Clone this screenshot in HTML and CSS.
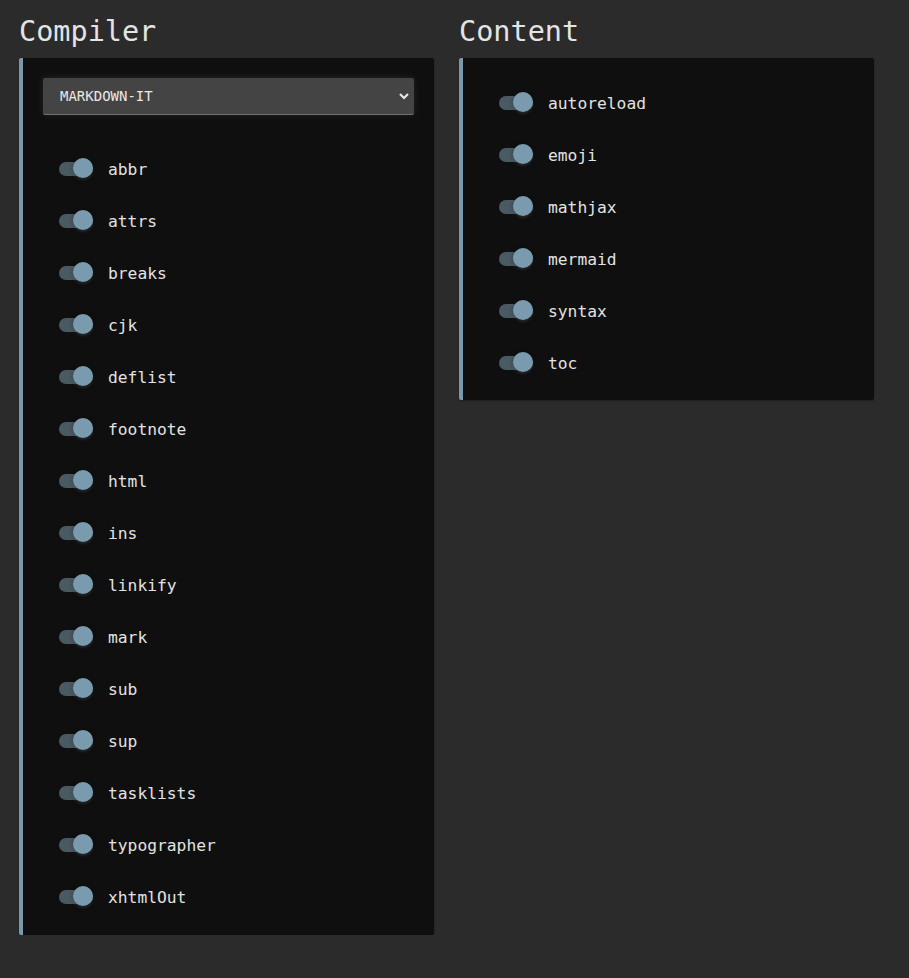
FILE: index.html
```html
<!DOCTYPE html>
<html>
<head>
<meta charset="utf-8">
<link rel="stylesheet" href="styles.css">
</head>
<body>
<div class="page">
  <section class="column">
    <h2 class="title">Compiler</h2>
    <div class="card">
      <div class="select">
        <span class="select-text">MARKDOWN-IT</span>
        <svg class="chevron" width="12" height="8" viewBox="0 0 12 8"><path d="M2 2 L6 6 L10 2" fill="none" stroke="#e6e6e6" stroke-width="2.2"/></svg>
      </div>
      <ul class="list list-compiler">
        <li class="row"><span class="switch"><span class="track"></span><span class="thumb"></span></span><span class="label">abbr</span></li>
        <li class="row"><span class="switch"><span class="track"></span><span class="thumb"></span></span><span class="label">attrs</span></li>
        <li class="row"><span class="switch"><span class="track"></span><span class="thumb"></span></span><span class="label">breaks</span></li>
        <li class="row"><span class="switch"><span class="track"></span><span class="thumb"></span></span><span class="label">cjk</span></li>
        <li class="row"><span class="switch"><span class="track"></span><span class="thumb"></span></span><span class="label">deflist</span></li>
        <li class="row"><span class="switch"><span class="track"></span><span class="thumb"></span></span><span class="label">footnote</span></li>
        <li class="row"><span class="switch"><span class="track"></span><span class="thumb"></span></span><span class="label">html</span></li>
        <li class="row"><span class="switch"><span class="track"></span><span class="thumb"></span></span><span class="label">ins</span></li>
        <li class="row"><span class="switch"><span class="track"></span><span class="thumb"></span></span><span class="label">linkify</span></li>
        <li class="row"><span class="switch"><span class="track"></span><span class="thumb"></span></span><span class="label">mark</span></li>
        <li class="row"><span class="switch"><span class="track"></span><span class="thumb"></span></span><span class="label">sub</span></li>
        <li class="row"><span class="switch"><span class="track"></span><span class="thumb"></span></span><span class="label">sup</span></li>
        <li class="row"><span class="switch"><span class="track"></span><span class="thumb"></span></span><span class="label">tasklists</span></li>
        <li class="row"><span class="switch"><span class="track"></span><span class="thumb"></span></span><span class="label">typographer</span></li>
        <li class="row"><span class="switch"><span class="track"></span><span class="thumb"></span></span><span class="label">xhtmlOut</span></li>
      </ul>
    </div>
  </section>
  <section class="column">
    <h2 class="title">Content</h2>
    <div class="card">
      <ul class="list list-content">
        <li class="row"><span class="switch"><span class="track"></span><span class="thumb"></span></span><span class="label">autoreload</span></li>
        <li class="row"><span class="switch"><span class="track"></span><span class="thumb"></span></span><span class="label">emoji</span></li>
        <li class="row"><span class="switch"><span class="track"></span><span class="thumb"></span></span><span class="label">mathjax</span></li>
        <li class="row"><span class="switch"><span class="track"></span><span class="thumb"></span></span><span class="label">mermaid</span></li>
        <li class="row"><span class="switch"><span class="track"></span><span class="thumb"></span></span><span class="label">syntax</span></li>
        <li class="row"><span class="switch"><span class="track"></span><span class="thumb"></span></span><span class="label">toc</span></li>
      </ul>
    </div>
  </section>
</div>
</body>
</html>
```
FILE: styles.css
```css
html, body {
  margin: 0;
  padding: 0;
  background: #2b2b2b;
  color: #e2e2e2;
  font-family: "DejaVu Sans Mono", "Liberation Mono", monospace;
}
.page {
  display: grid;
  grid-template-columns: 415px 415px;
  column-gap: 25px;
  align-items: start;
  padding: 15px 0 0 19px;
}
.title {
  margin: 0 0 9px 0;
  font-size: 28.5px;
  line-height: 34px;
  font-weight: normal;
  color: #e4e4e4;
}
.card {
  background: #0f0f0f;
  border-left: 4px solid #7a9aab;
  border-radius: 2px;
  padding: 20px 20px 11px 20px;
  box-shadow: 0 1px 2px rgba(0,0,0,0.3);
}
.select {
  height: 37px;
  box-sizing: border-box;
  background: #444444;
  border-bottom: 1px solid #707070;
  border-radius: 2px;
  box-shadow: 0 0 6px rgba(255,255,255,0.12), 0 1px 3px rgba(0,0,0,0.5);
  display: flex;
  align-items: center;
  justify-content: space-between;
  padding: 0 4px 0 17px;
}
.select-text {
  font-size: 14px;
  color: #e8e8e8;
}
.chevron {
  display: block;
}
.list {
  list-style: none;
  margin: 0;
  padding: 0;
}
.list-compiler {
  margin-top: 28px;
  margin-bottom: 1px;
}
.list-content {
  margin-top: -1px;
}
.row {
  height: 52px;
  display: flex;
  align-items: center;
  padding-left: 16px;
}
.switch {
  position: relative;
  width: 36px;
  height: 20px;
  margin-right: 13px;
  flex: none;
}
.track {
  position: absolute;
  left: 0;
  top: 3px;
  width: 34px;
  height: 14px;
  border-radius: 7px;
  background: #4a5a63;
}
.thumb {
  position: absolute;
  left: 14px;
  top: -1px;
  width: 20px;
  height: 20px;
  border-radius: 50%;
  background: #7a9bad;
  box-shadow: 0 2px 3px rgba(255,255,255,0.12), 0 1px 4px rgba(0,0,0,0.5);
}
.label {
  font-size: 16.3px;
  color: #e2e2e2;
}
```
